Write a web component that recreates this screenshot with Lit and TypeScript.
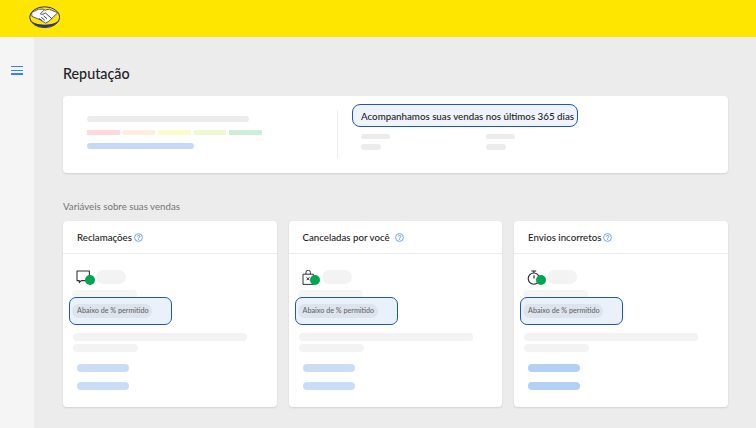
import { LitElement, html, css, svg } from "lit";
import { customElement } from "lit/decorators.js";

const ICONS = {
  chat: svg`<path d="M1 1h12.4v9.6H5.2l-1.9 2v-2H1z" fill="none" stroke="#333" stroke-width="1.1" stroke-linejoin="round"/>`,
  bag: svg`<path d="M1 4.2h10.4v10.2H1z" fill="none" stroke="#333" stroke-width="1"/><path d="M4 4.2V2.4a2.2 2.2 0 0 1 4.4 0v1.8" fill="none" stroke="#333" stroke-width="1"/><path d="M4.6 7.4l2.8 2.8m0-2.8l-2.8 2.8" stroke="#222" stroke-width="1"/>`,
  timer: svg`<circle cx="6.8" cy="8.6" r="5.6" fill="none" stroke="#222" stroke-width="1.1"/><path d="M4.4 1h4.8M6.8 1v2" stroke="#222" stroke-width="1"/><path d="M7 8.4V5.2" stroke="#222" stroke-width="1.1"/>`,
};

const CARDS = [
  { title: "Reclamações", icon: ICONS.chat, gap: 2, blue: "#c9ddf7" },
  { title: "Canceladas por você", icon: ICONS.bag, gap: 5.5, blue: "#c9ddf7" },
  { title: "Envios incorretos", icon: ICONS.timer, gap: 2, blue: "#b3d0f5" },
];

@customElement("app-root")
export class AppRoot extends LitElement {
  static styles = css`
    :host {
      display: block;
      width: 756px;
      height: 428px;
      overflow: hidden;
      background: #ececec;
      font-family: Lato, "Liberation Sans", sans-serif;
      color: #222;
    }
    .topbar {
      height: 37px;
      background: #ffe600;
      padding: 6px 0 0 29px;
      box-sizing: border-box;
    }
    .logo {
      display: block;
      width: 32px;
      height: 23px;
    }
    .layout {
      display: flex;
      height: 391px;
    }
    .side {
      width: 34px;
      flex: none;
      background: #f5f5f5;
      padding: 29px 0 0 11px;
      box-sizing: border-box;
    }
    .burger {
      width: 12px;
      display: flex;
      flex-direction: column;
      gap: 2.2px;
    }
    .burger i {
      display: block;
      height: 1.4px;
      background: #3483fa;
    }
    main {
      flex: 1;
      padding: 27px 28.5px 0 29px;
      min-width: 0;
    }
    h1 {
      margin: 0 0 13px;
      font-size: 14.3px;
      line-height: 19px;
      font-weight: 500;
      color: #222;
    }
    .summary {
      height: 77px;
      box-sizing: border-box;
      background: #fff;
      border-radius: 4px;
      box-shadow: 0 1px 2px rgba(0, 0, 0, 0.12);
      display: flex;
      padding: 14px 0 0 24px;
    }
    .score {
      width: 251px;
      height: 48px;
      border-right: 1px solid #ebebeb;
      padding-top: 6px;
      box-sizing: border-box;
    }
    .bar {
      display: block;
      border-radius: 4px;
      background: #ececec;
    }
    .segments {
      display: flex;
      gap: 3px;
      margin: 8px 0;
    }
    .segments i {
      display: block;
      width: 32.6px;
      height: 5px;
    }
    .period {
      margin: -6px 0 0 13.5px;
    }
    .flag {
      height: 23px;
      width: 226px;
      box-sizing: border-box;
      border: 1.6px solid #1d56c0;
      border-radius: 8px;
      background: #eef3fc;
      padding-left: 8.5px;
      display: flex;
      align-items: center;
      font-size: 9.75px;
      font-weight: 500;
      white-space: nowrap;
    }
    .stats {
      display: flex;
      gap: 96px;
      padding: 7px 0 0 9.5px;
    }
    .stat {
      width: 29px;
      display: flex;
      flex-direction: column;
      gap: 5px;
    }
    .heading {
      margin: 27px 0 9px;
      font-size: 9.7px;
      line-height: 12px;
      font-weight: 400;
      color: #737373;
    }
    .cards {
      display: grid;
      grid-template-columns: repeat(3, 213.5px);
      gap: 12px;
    }
    .card {
      height: 186px;
      background: #fff;
      border-radius: 4px;
      box-shadow: 0 1px 2px rgba(0, 0, 0, 0.12);
    }
    .card-head {
      height: 33px;
      box-sizing: border-box;
      border-bottom: 1px solid #ebebeb;
      display: flex;
      align-items: center;
      padding-left: 14px;
      font-size: 9.7px;
      font-weight: 500;
    }
    .help {
      display: block;
      width: 9px;
      height: 9px;
      flex: none;
    }
    .card-body {
      padding: 16px 0 0 9px;
    }
    .metric {
      display: flex;
      align-items: flex-start;
      height: 14px;
      padding-left: 4px;
    }
    .metric-icon {
      position: relative;
      width: 20px;
      height: 14px;
      flex: none;
    }
    .metric-icon svg {
      display: block;
      width: 14px;
      height: 15px;
    }
    .metric-icon b {
      position: absolute;
      left: 8.5px;
      top: 5px;
      width: 10px;
      height: 10px;
      border-radius: 50%;
      background: #00a650;
    }
    .metric .bar {
      width: 30px;
      height: 14px;
      border-radius: 7px;
      background: #f3f3f3;
    }
    .note {
      width: 65px;
      height: 8px;
      margin-top: 6px;
      background: #f5f5f5;
    }
    .badge-box {
      width: 103px;
      height: 28px;
      box-sizing: border-box;
      margin: -1px 0 0 -3px;
      border: 1.6px solid #1d56c0;
      border-radius: 7px;
      background: #eaf1fb;
      padding: 6.4px 0 0 2px;
    }
    .badge {
      display: block;
      width: 80px;
      height: 14px;
      box-sizing: border-box;
      padding-left: 5px;
      border-radius: 7px;
      background: #dee4ee;
      color: #666;
      font-size: 7.2px;
      line-height: 14px;
      font-weight: 500;
      white-space: nowrap;
    }
    .lines {
      display: flex;
      flex-direction: column;
      gap: 3px;
      margin: 8px 0 12px 1px;
    }
    .lines .bar {
      height: 8px;
      background: #f3f3f3;
    }
    .links {
      display: flex;
      flex-direction: column;
      gap: 10px;
      padding-left: 5px;
    }
    .links .bar {
      width: 52px;
      height: 8px;
    }
  `;

  private logo() {
    return html`<svg class="logo" viewBox="0 0 32 23">
      <ellipse cx="15.7" cy="11.2" rx="15" ry="10.4" fill="#ffe600" stroke="#2d3277" stroke-width="1" />
      <path d="M1.2 13C4 20.6 27.4 20.6 30.2 13C27 24 4.4 24 1.2 13Z" fill="#2d3277" />
      <path d="M2.6 6.6 9.6 3.2h4.6l2 1 4-1 8.6 3.6-3.8 3.4-5.4 5.4-3 1.4-5.4-3.2L3 10.4z" fill="#fff" stroke="#2d3277" stroke-width=".8" stroke-linejoin="round" />
      <path d="M15.2 4.2 11.4 7.8c1.5 1.2 3.2.4 4.8-1l7 6.2M12.2 11.2l3.6 3M10.2 12.4l3 2.4M14.6 9.8l3.4 3" fill="none" stroke="#2d3277" stroke-width=".9" />
    </svg>`;
  }

  private help() {
    return html`<svg class="help" viewBox="0 0 9 9">
      <circle cx="4.5" cy="4.5" r="3.9" fill="none" stroke="#5f9cf5" stroke-width=".9" />
      <path d="M3.3 3.5c.1-1.4 2.5-1.4 2.5 0 0 .9-1.2 1-1.3 2M4.5 6.2v.8" fill="none" stroke="#3483fa" stroke-width=".8" />
    </svg>`;
  }

  private card(c: (typeof CARDS)[number]) {
    return html`<section class="card">
      <div class="card-head">
        <span>${c.title}</span>
        <span style="width:${c.gap}px"></span>${this.help()}
      </div>
      <div class="card-body">
        <div class="metric">
          <div class="metric-icon"><svg viewBox="0 0 14 15">${c.icon}</svg><b></b></div>
          <span class="bar"></span>
        </div>
        <span class="bar note"></span>
        <div class="badge-box"><span class="badge">Abaixo de % permitido</span></div>
        <div class="lines">
          <span class="bar" style="width:174px"></span>
          <span class="bar" style="width:65px"></span>
        </div>
        <div class="links">
          <span class="bar" style="background:${c.blue}"></span>
          <span class="bar" style="background:${c.blue}"></span>
        </div>
      </div>
    </section>`;
  }

  render() {
    return html`
      <header class="topbar">${this.logo()}</header>
      <div class="layout">
        <nav class="side">
          <div class="burger"><i></i><i></i><i></i></div>
        </nav>
        <main>
          <h1>Reputação</h1>
          <section class="summary">
            <div class="score">
              <span class="bar" style="width:162px;height:6px"></span>
              <div class="segments">
                <i style="background:#fdd8dc"></i>
                <i style="background:#ffeedb"></i>
                <i style="background:#fffbc9"></i>
                <i style="background:#eef9cf"></i>
                <i style="background:#cdeedb"></i>
              </div>
              <span class="bar" style="width:107px;height:6px;background:#c3d9f7"></span>
            </div>
            <div class="period">
              <div class="flag">Acompanhamos suas vendas nos últimos 365 dias</div>
              <div class="stats">
                <div class="stat">
                  <span class="bar" style="height:5px"></span>
                  <span class="bar" style="width:20px;height:6px"></span>
                </div>
                <div class="stat">
                  <span class="bar" style="height:5px"></span>
                  <span class="bar" style="width:20px;height:6px"></span>
                </div>
              </div>
            </div>
          </section>
          <h2 class="heading">Variáveis sobre suas vendas</h2>
          <div class="cards">${CARDS.map((c) => this.card(c))}</div>
        </main>
      </div>
    `;
  }
}
